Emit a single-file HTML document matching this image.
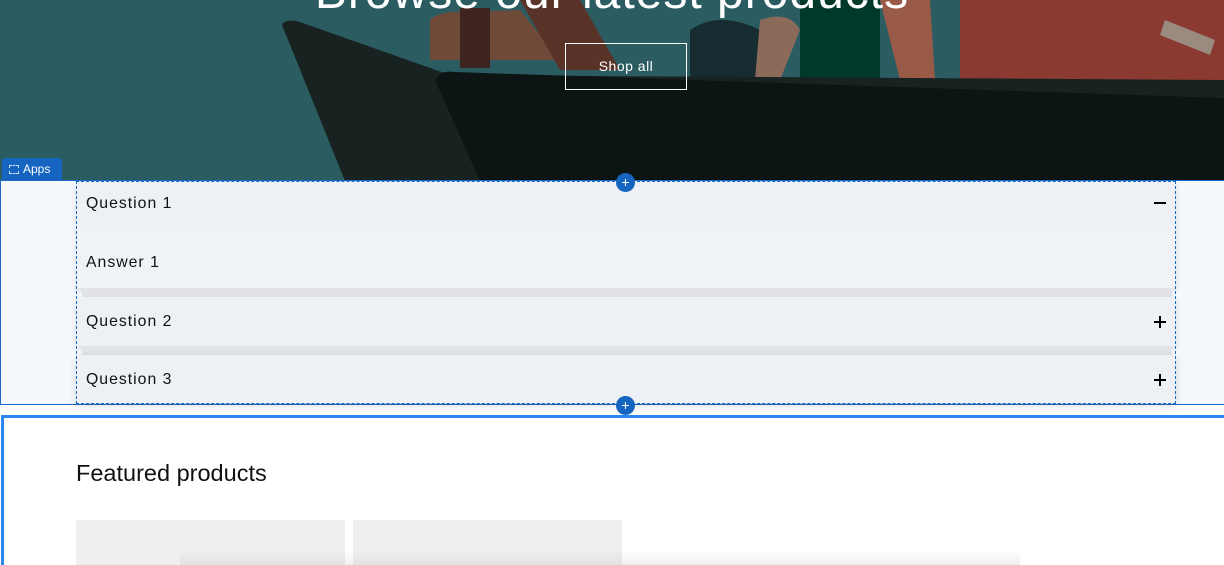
<!DOCTYPE html><html><head><style>
*{margin:0;padding:0;box-sizing:border-box}
html,body{width:1224px;height:565px;overflow:hidden}
body{background:#fff;font-family:"Liberation Sans",sans-serif;position:relative}
.abs{position:absolute}
.q{position:absolute;left:86px;font-size:15.8px;letter-spacing:1px;color:#111}
</style></head><body>
<div class="abs" style="left:0;top:0;width:1224px;height:181px;background:#2b5c62;overflow:hidden">
<svg width="1224" height="181" style="position:absolute;left:0;top:0">
<path d="M430 20 Q440 10 470 12 L520 10 L560 60 L430 60Z" fill="#704a38"/>
<rect x="460" y="8" width="30" height="60" fill="#3f2520"/>
<path d="M520 0 L580 0 L620 70 L560 70Z" fill="#5a3328"/>
<path d="M690 30 Q720 10 760 30 L760 80 L690 80Z" fill="#172c31"/>
<path d="M760 20 Q790 10 800 30 L780 80 L755 80Z" fill="#8c6a5a"/>
<rect x="800" y="0" width="80" height="80" fill="#00382a"/>
<path d="M880 0 L930 0 L935 80 L900 80Z" fill="#9a5a48"/>
<path d="M960 0 L1224 0 L1224 80 L960 80Z" fill="#8a3a30"/>
<path d="M1165 20 L1215 40 L1210 55 L1160 35Z" fill="#9a8a80"/>
<path d="M282 25 Q285 18 300 22 L450 75 L1224 80 L1224 181 L345 181Z" fill="#182221"/>
<path d="M435 80 Q440 70 455 72 L1224 98 L1224 181 L480 181Z" fill="#0c1513"/>
</svg>
<div class="abs" style="left:0;width:1224px;top:-35px;text-align:center;color:#fff;font-size:48px;letter-spacing:1px">Browse our latest products</div>
<div class="abs" style="left:565px;top:43px;width:122px;height:47px;border:1px solid #fff;color:#fff;font-size:14px;text-align:center;line-height:45px;letter-spacing:.5px">Shop all</div>
</div>
<div class="abs" style="left:2px;top:158px;width:60px;height:23px;background:#1565c0;border-radius:4px 4px 0 0;color:#fff;font-size:12px;line-height:22px;padding-left:21px">Apps<div class="abs" style="left:7px;top:7px;width:10px;height:9px;border:1px dashed #cfe0f5"></div></div>
<div class="abs" style="left:0;top:180px;width:1226px;height:225px;border:1px solid #1a6ac7;background:#f5f8fd"></div>
<div class="abs" style="left:76px;top:181px;width:1100px;height:107px;background:#eff2f7;box-shadow:0 3px 6px rgba(0,0,0,.12)"></div>
<div class="abs" style="left:76px;top:181px;width:1100px;height:45px;background:#edf0f5"></div>
<div class="abs" style="left:82px;top:288px;width:1090px;height:9px;background:#e1e3e7"></div>
<div class="abs" style="left:76px;top:297px;width:1100px;height:49px;background:#edf0f5;box-shadow:0 3px 6px rgba(0,0,0,.12)"></div>
<div class="abs" style="left:82px;top:346px;width:1090px;height:9px;background:#e1e3e7"></div>
<div class="abs" style="left:76px;top:355px;width:1100px;height:48px;background:#edf0f5;box-shadow:0 3px 8px rgba(0,0,0,.14)"></div>
<div class="abs" style="left:76px;top:181px;width:1100px;height:223px;border:1px dashed #1a6ac7"></div>
<div class="q" style="top:195px">Question 1</div>
<div class="q" style="top:254px">Answer 1</div>
<div class="q" style="top:313px">Question 2</div>
<div class="q" style="top:371px">Question 3</div>
<div class="abs" style="left:1154px;top:202px;width:12px;height:2px;background:#000"></div>
<div class="abs" style="left:1154px;top:321px;width:12px;height:2px;background:#000"></div><div class="abs" style="left:1159px;top:316px;width:2px;height:12px;background:#000"></div>
<div class="abs" style="left:1154px;top:379px;width:12px;height:2px;background:#000"></div><div class="abs" style="left:1159px;top:374px;width:2px;height:12px;background:#000"></div>
<div class="abs" style="left:616px;top:173px;width:19px;height:19px;border-radius:50%;background:#1565c0;color:#fff;font-size:14px;line-height:18px;text-align:center">+</div>
<div class="abs" style="left:616px;top:396px;width:19px;height:19px;border-radius:50%;background:#1565c0;color:#fff;font-size:14px;line-height:18px;text-align:center">+</div>
<div class="abs" style="left:1px;top:415px;width:1223px;height:150px;border-top:3px solid #2b86f0;border-left:3px solid #2b86f0"></div>
<div class="abs" style="left:76px;top:460px;font-size:23.5px;color:#111">Featured products</div>
<div class="abs" style="left:76px;top:520px;width:269px;height:45px;background:#efefef"></div>
<div class="abs" style="left:353px;top:520px;width:269px;height:45px;background:#efefef"></div>
<div class="abs" style="left:180px;top:550px;width:840px;height:15px;background:linear-gradient(rgba(0,0,0,0),rgba(0,0,0,.06))"></div>
</body></html>
